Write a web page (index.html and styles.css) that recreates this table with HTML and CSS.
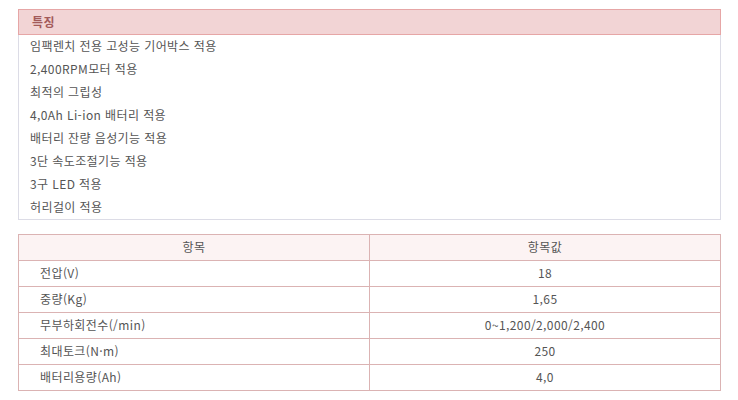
FILE: index.html
```html
<!DOCTYPE html>
<html lang="ko">
<head>
<meta charset="utf-8">
<link rel="stylesheet" href="styles.css">
</head>
<body>
<div class="page">
  <section class="features">
    <div class="features-head">특징</div>
    <ul class="features-list">
      <li>임팩렌치 전용 고성능 기어박스 적용</li>
      <li>2,400RPM모터 적용</li>
      <li>최적의 그립성</li>
      <li>4,0Ah Li-ion 배터리 적용</li>
      <li>배터리 잔량 음성기능 적용</li>
      <li>3단 속도조절기능 적용</li>
      <li>3구 LED 적용</li>
      <li>허리걸이 적용</li>
    </ul>
  </section>
  <table class="spec">
    <thead>
      <tr><th>항목</th><th>항목값</th></tr>
    </thead>
    <tbody>
      <tr><td class="name">전압(V)</td><td class="val">18</td></tr>
      <tr><td class="name">중량(Kg)</td><td class="val">1,65</td></tr>
      <tr><td class="name">무부하회전수(/min)</td><td class="val">0~1,200/2,000/2,400</td></tr>
      <tr><td class="name">최대토크(N·m)</td><td class="val">250</td></tr>
      <tr><td class="name">배터리용량(Ah)</td><td class="val">4,0</td></tr>
    </tbody>
  </table>
</div>
</body>
</html>
```

FILE: styles.css
```css
html, body {
  margin: 0;
  padding: 0;
  background: #ffffff;
}
body {
  font-family: "Noto Sans CJK KR", "Noto Sans", sans-serif;
  font-size: 12px;
  letter-spacing: 0.4px;
  color: #555555;
}
.page {
  padding: 9px 0 0 18px;
  width: 703px;
}
.features {
  display: flex;
  flex-direction: column;
}
.features-head {
  height: 24px;
  line-height: 23px;
  border: 1px solid #e6a6a6;
  background: #f2d4d5;
  color: #a35a5a;
  font-weight: bold;
  padding-left: 13px;
}
.features-list {
  list-style: none;
  margin: 0;
  padding: 0 0 0 11px;
  border: 1px solid #dcdce6;
  border-top: none;
}
.features-list li {
  height: 23px;
  line-height: 22px;
}
.spec {
  margin-top: 14px;
  width: 703px;
  border-collapse: collapse;
  table-layout: fixed;
}
.spec th, .spec td {
  border: 1px solid #dbb3b3;
  height: 25px;
  padding: 0;
  line-height: 24px;
  font-weight: normal;
  vertical-align: top;
}
.spec th {
  background: #fcf3f3;
  text-align: center;
}
.spec th:first-child {
  width: 350px;
}
.spec td.name {
  padding-left: 21px;
  text-align: left;
}
.spec td.val {
  text-align: center;
}
```
